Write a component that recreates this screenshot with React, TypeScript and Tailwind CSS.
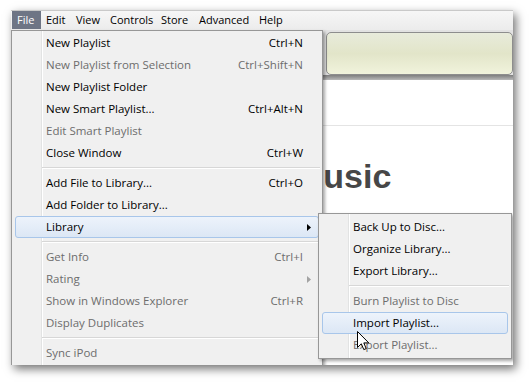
import React from "react";

type Item =
  | "sep"
  | { label: string; sc?: string; dis?: boolean; arrow?: boolean; hl?: boolean };

const fileItems: Item[] = [
  { label: "New Playlist", sc: "Ctrl+N" },
  { label: "New Playlist from Selection", sc: "Ctrl+Shift+N", dis: true },
  { label: "New Playlist Folder" },
  { label: "New Smart Playlist...", sc: "Ctrl+Alt+N" },
  { label: "Edit Smart Playlist", dis: true },
  { label: "Close Window", sc: "Ctrl+W" },
  "sep",
  { label: "Add File to Library...", sc: "Ctrl+O" },
  { label: "Add Folder to Library..." },
  { label: "Library", arrow: true, hl: true },
  "sep",
  { label: "Get Info", sc: "Ctrl+I", dis: true },
  { label: "Rating", arrow: true, dis: true },
  { label: "Show in Windows Explorer", sc: "Ctrl+R", dis: true },
  { label: "Display Duplicates", dis: true },
  "sep",
  { label: "Sync iPod", dis: true },
];

const subItems: Item[] = [
  { label: "Back Up to Disc..." },
  { label: "Organize Library..." },
  { label: "Export Library..." },
  "sep",
  { label: "Burn Playlist to Disc", dis: true },
  { label: "Import Playlist...", hl: true },
  { label: "Export Playlist...", dis: true },
];

function Arrow({ dis }: { dis?: boolean }) {
  return (
    <svg width="4" height="7" viewBox="0 0 4 7" className="shrink-0">
      <path d="M0 0 L4 3.5 L0 7 Z" fill={dis ? "#a3a3a3" : "#000"} />
    </svg>
  );
}

function MenuRows({ items }: { items: Item[] }) {
  return (
    <>
      {items.map((it, i) =>
        it === "sep" ? (
          <div key={i} className="relative h-[8px] flex items-center pl-[30px] pr-[2px]">
            <div className="h-[2px] w-full border-t border-[#d7d7d7] border-b border-b-white" />
          </div>
        ) : (
          <div
            key={i}
            className={
              "relative h-[22px] mx-[3px] rounded-[3px] border flex items-center pl-[30px] pr-[6px] " +
              (it.hl
                ? "border-[#a8c6ea] bg-gradient-to-b from-[#edf3fb] to-[#dce7f5]"
                : "border-transparent")
            }
          >
            <span className={it.dis ? "text-[#6d6d6d]" : "text-black"}>{it.label}</span>
            {it.sc && (
              <span className={"ml-auto mr-[9px] " + (it.dis ? "text-[#6d6d6d]" : "text-black")}>
                {it.sc}
              </span>
            )}
            {it.arrow && (
              <span className="ml-auto mr-[1px] flex items-center">
                <Arrow dis={it.dis} />
              </span>
            )}
          </div>
        )
      )}
    </>
  );
}

export default function App() {
  const menus = [
    { t: "File", w: "w-[29px]", hl: true },
    { t: "Edit", w: "w-[30px]" },
    { t: "View", w: "w-[34px]" },
    { t: "Controls", w: "w-[51px]" },
    { t: "Store", w: "w-[38px]" },
    { t: "Advanced", w: "w-[60px]" },
    { t: "Help", w: "w-[34px]" },
  ];
  return (
    <div className="w-[530px] h-[384px] bg-white overflow-hidden pl-[11px] pt-[10px] font-['Segoe_UI','Open_Sans',sans-serif] text-[11.5px]">
      <div className="relative w-[502px] h-[355px] bg-white border-t border-[#c9c9c9] shadow-[3px_4px_9px_rgba(0,0,0,0.55)] overflow-hidden flex flex-col">
        {/* menu bar */}
        <div className="h-[19px] shrink-0 flex items-stretch pl-[1px] bg-gradient-to-b from-[#f6f6f6] to-[#ececec] text-[11px]">
          {menus.map((m) => (
            <div
              key={m.t}
              className={
                m.w +
                " flex items-center pl-[5px] mb-[1px] whitespace-nowrap " +
                (m.hl ? "bg-[#6e7585] text-white" : "text-black")
              }
            >
              {m.t}
            </div>
          ))}
        </div>

        {/* toolbar */}
        <div className="h-[50px] shrink-0 flex flex-col bg-[#e2e2e2]">
          <div className="flex-1 flex pt-[2px] pl-[315px]">
            <div className="w-[230px] h-[43px] rounded-[5px] border border-[#8d8d8d] bg-gradient-to-b from-[#e8ebdb] via-[#e2e5c9] to-[#f1f3dc]" />
          </div>
          <div className="h-[5px] bg-gradient-to-b from-[#7e7e7e] to-[#b9b9b9]" />
        </div>

        {/* body */}
        <div className="flex-1 flex">
          <div className="w-[180px] bg-[#dde3ea]" />
          <div className="flex-1 flex flex-col bg-white">
            <div className="h-[46px] border-b border-[#e4e4e4]" />
            <div className="pl-[104px] mt-[33px] h-[34px] leading-[34px] text-[34px] font-bold text-[#474747] font-['Liberation_Sans',Arial,sans-serif] whitespace-nowrap">
              Music
            </div>
          </div>
        </div>

        {/* File dropdown */}
        <div className="absolute left-0 top-[19px] w-[312px] h-[345px] bg-[#f0f0f0] border border-[#979797] shadow-[2px_2px_3px_rgba(0,0,0,0.35)] pt-[1px]">
          <div className="absolute top-0 bottom-0 left-[29px] w-[2px] border-l border-[#e2e3e3] border-r border-r-white" />
          <MenuRows items={fileItems} />
        </div>

        {/* Library submenu */}
        <div className="absolute left-[307px] top-[202px] w-[194px] h-[146px] bg-[#f0f0f0] border border-[#979797] shadow-[2px_2px_3px_rgba(0,0,0,0.35)] pt-[2px]">
          <div className="absolute top-0 bottom-0 left-[29px] w-[2px] border-l border-[#e2e3e3] border-r border-r-white" />
          <MenuRows items={subItems} />
        </div>

        {/* cursor */}
        <svg
          className="absolute left-[346px] top-[320px]"
          width="13"
          height="21"
          viewBox="0 0 13 21"
        >
          <path
            d="M0.5 0.5 L0.5 16.5 L4.3 12.8 L6.8 18.6 L9.2 17.6 L6.8 11.9 L11.8 11.9 Z"
            fill="#fff"
            stroke="#000"
            strokeWidth="1"
            strokeLinejoin="miter"
          />
        </svg>
      </div>
    </div>
  );
}
